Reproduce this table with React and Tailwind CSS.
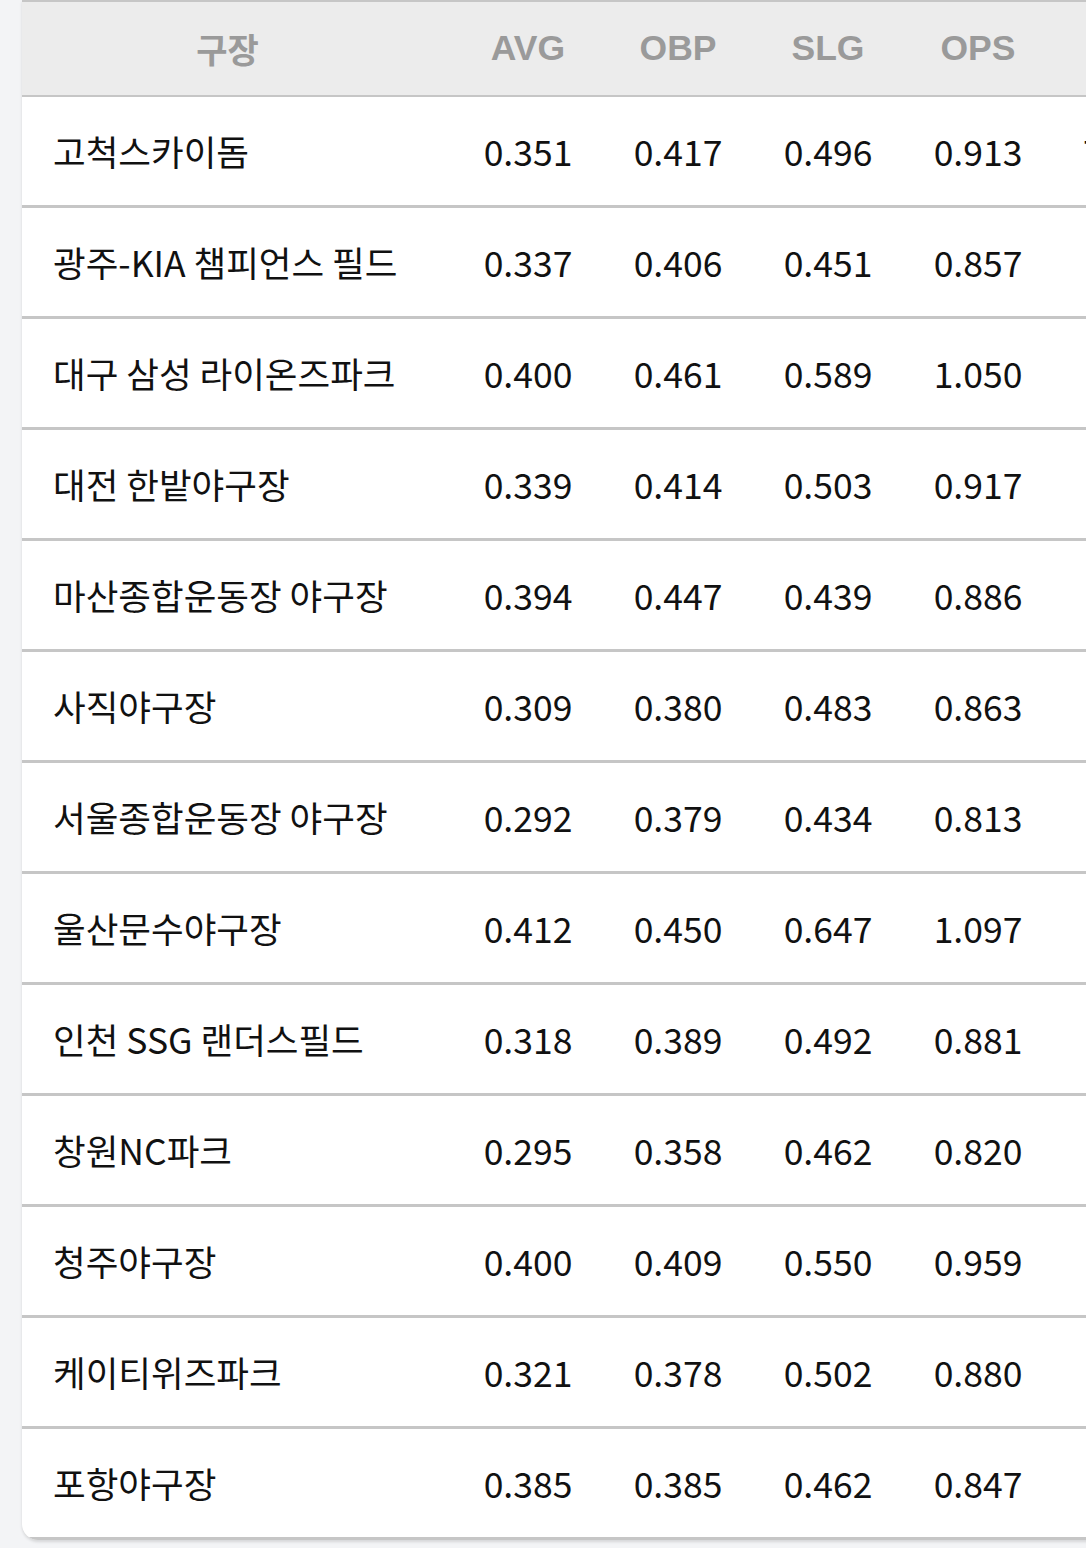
import React from "react";

const rows = [
  { name: "고척스카이돔", avg: "0.351", obp: "0.417", slg: "0.496", ops: "0.913", extra: "7" },
  { name: "광주-KIA 챔피언스 필드", avg: "0.337", obp: "0.406", slg: "0.451", ops: "0.857" },
  { name: "대구 삼성 라이온즈파크", avg: "0.400", obp: "0.461", slg: "0.589", ops: "1.050" },
  { name: "대전 한밭야구장", avg: "0.339", obp: "0.414", slg: "0.503", ops: "0.917" },
  { name: "마산종합운동장 야구장", avg: "0.394", obp: "0.447", slg: "0.439", ops: "0.886" },
  { name: "사직야구장", avg: "0.309", obp: "0.380", slg: "0.483", ops: "0.863" },
  { name: "서울종합운동장 야구장", avg: "0.292", obp: "0.379", slg: "0.434", ops: "0.813" },
  { name: "울산문수야구장", avg: "0.412", obp: "0.450", slg: "0.647", ops: "1.097" },
  { name: "인천 SSG 랜더스필드", avg: "0.318", obp: "0.389", slg: "0.492", ops: "0.881" },
  { name: "창원NC파크", avg: "0.295", obp: "0.358", slg: "0.462", ops: "0.820" },
  { name: "청주야구장", avg: "0.400", obp: "0.409", slg: "0.550", ops: "0.959" },
  { name: "케이티위즈파크", avg: "0.321", obp: "0.378", slg: "0.502", ops: "0.880" },
  { name: "포항야구장", avg: "0.385", obp: "0.385", slg: "0.462", ops: "0.847" },
];

const StatCell = ({ children }) => (
  <div className="w-[150px] shrink-0 flex items-center justify-center">{children}</div>
);

export default function App() {
  return (
    <div className="w-full min-h-[1548px] bg-[#f3f4f6] overflow-hidden">
      <div className="ml-[22px] w-[1300px] bg-white rounded-bl-[16px] overflow-hidden shadow-[0_2px_3px_rgba(0,0,0,0.12)]">
        {/* header */}
        <div
          className="flex h-[97px] bg-[#ececec] border-t-[2px] border-b-[2px] border-[#c6c6c6] text-[35.5px] font-bold text-[#9a9a9a]"
          style={{ fontFamily: '"Liberation Sans", "Noto Sans CJK KR", sans-serif' }}
        >
          <div className="w-[411px] shrink-0 flex items-center justify-center">
            <span className="text-[34px]" style={{ fontFamily: '"Noto Sans CJK KR", sans-serif' }}>구장</span>
          </div>
          <div className="w-[20px] shrink-0" />
          <StatCell>AVG</StatCell>
          <StatCell>OBP</StatCell>
          <StatCell>SLG</StatCell>
          <StatCell>OPS</StatCell>
          <StatCell></StatCell>
        </div>

        {/* rows */}
        {rows.map((r) => (
          <div
            key={r.name}
            className="flex h-[111px] border-b-[3px] border-[#c6c6c6] text-[35.5px] text-[#111]"
            style={{ fontFamily: '"Noto Sans CJK KR", sans-serif' }}
          >
            <div className="w-[411px] shrink-0 flex items-center pl-[31px] whitespace-nowrap">{r.name}</div>
            <div className="w-[20px] shrink-0" />
            <StatCell>{r.avg}</StatCell>
            <StatCell>{r.obp}</StatCell>
            <StatCell>{r.slg}</StatCell>
            <StatCell>{r.ops}</StatCell>
            <div className="w-[150px] shrink-0 flex items-center pl-[30px]">{r.extra || ""}</div>
          </div>
        ))}
      </div>
    </div>
  );
}
